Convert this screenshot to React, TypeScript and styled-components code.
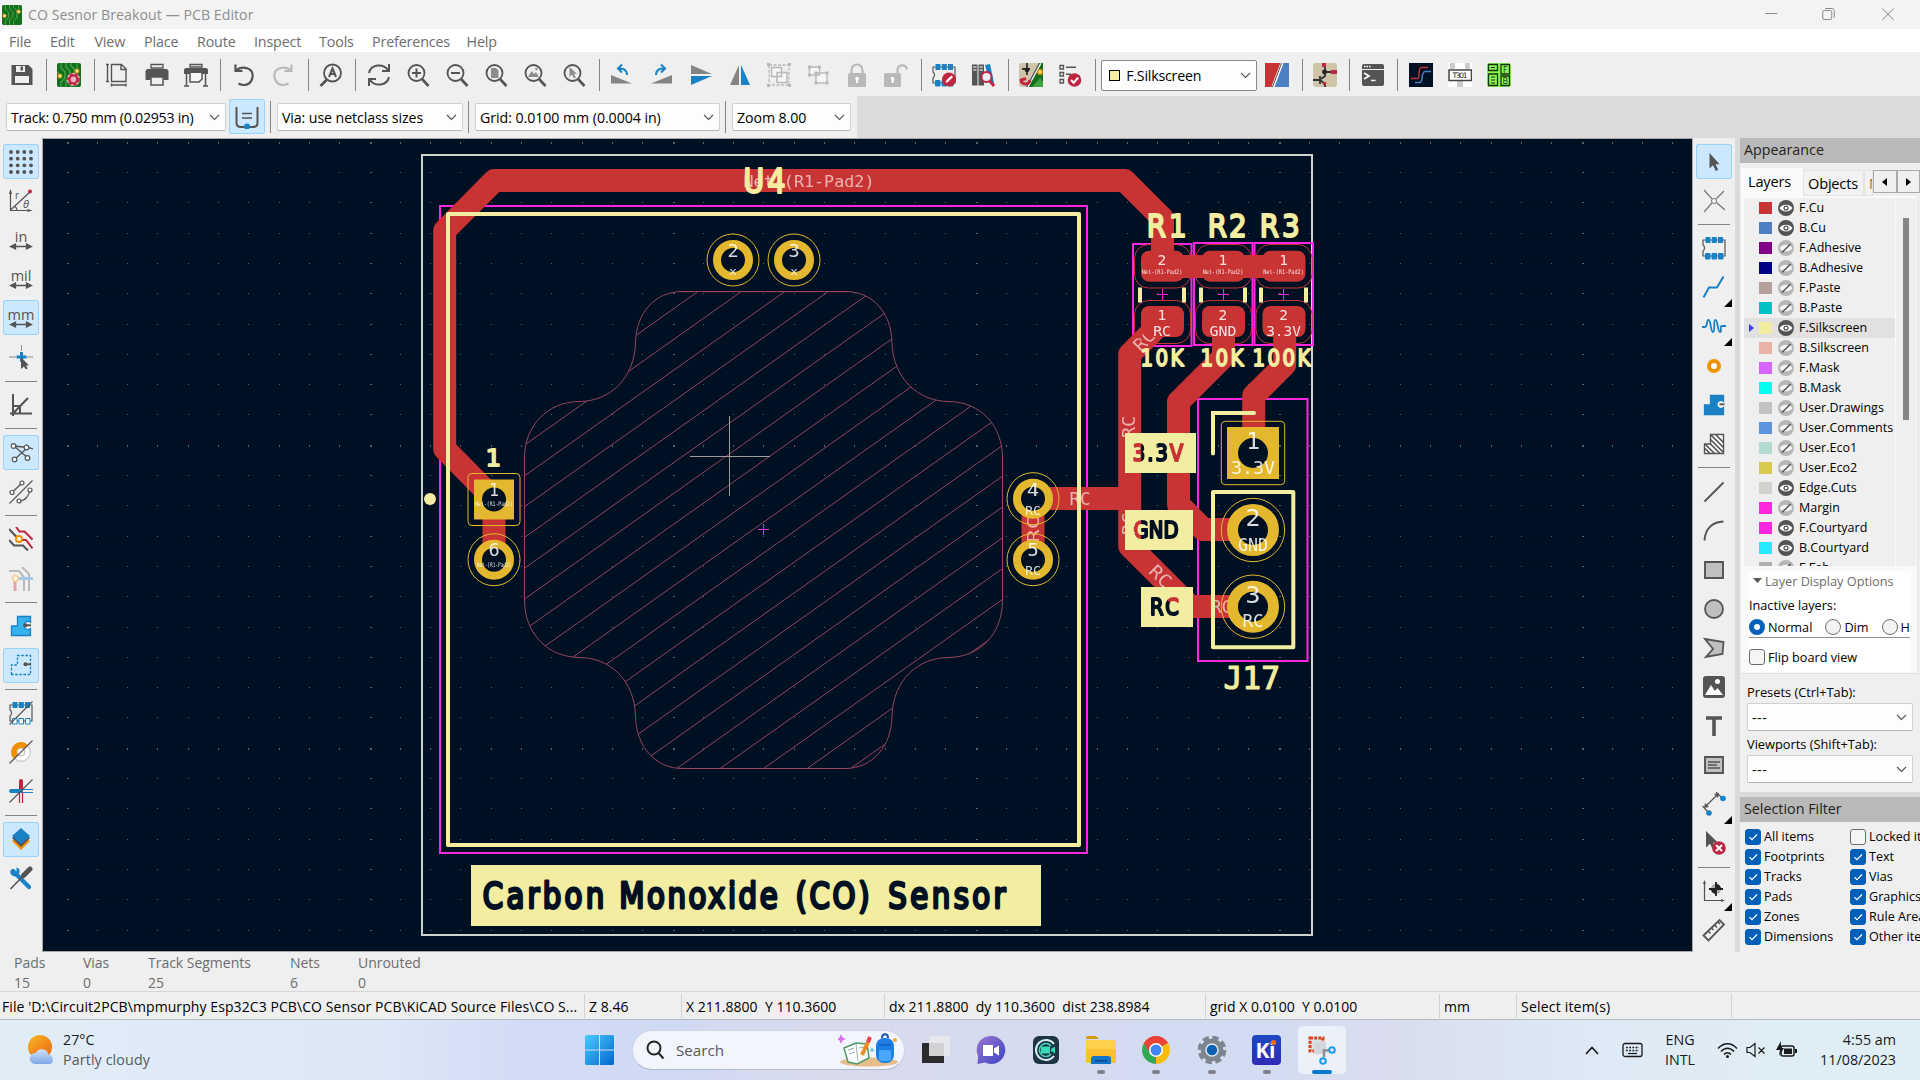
import React from 'react';
import styled, { createGlobalStyle, css } from 'styled-components';

const G = '#545454';
const B = '#1a81c4';
const R = '#bf2641';
const O = '#f29100';
const LG = '#b9b9b9';

const Global = createGlobalStyle`
  * { box-sizing: border-box; }
  body { margin: 0; background: #efefef; overflow: hidden; }
  body, text { font-family: "Open Sans", "Noto Sans", sans-serif; }
`;

const Screen = styled.div`
  width: 1920px;
  height: 1080px;
  display: flex;
  flex-direction: column;
  background: #efefef;
  color: #000;
  font-size: 14px;
  line-height: 20px;
  white-space: pre;
  overflow: hidden;
`;

/* ---------- title and menu ---------- */
const TitleBar = styled.header`
  height: 29px;
  flex: none;
  background: #f3f3f3;
  display: flex;
  align-items: center;
  padding-left: 2px;
  color: #8f8f8f;
`;
const TitleText = styled.span`
  margin-left: 6px;
  flex: 1;
  font-size: 14.2px;
  letter-spacing: 0.02px;
`;
const WindowButtons = styled.div`
  display: flex;
  padding-right: 3px;
  svg { width: 58.5px; height: 29px; }
`;
const MenuBar = styled.nav`
  height: 23px;
  flex: none;
  background: #fff;
  display: flex;
  align-items: center;
  padding: 2px 0 0 9px;
  color: #6d6d6d;
  font-size: 14.3px;
`;
const MenuItem = styled.span<{ $w: number }>`
  width: ${p => p.$w}px;
  letter-spacing: -0.15px;
`;

/* ---------- toolbars ---------- */
const TopBar = styled.div`
  height: 44px;
  flex: none;
  display: flex;
  align-items: center;
  padding: 2px 0 0 2px;
  background: #efefef;
`;
const ToolButton = styled.div<{ $on?: boolean; $v?: boolean }>`
  width: ${p => (p.$v ? 35.5 : 39.15)}px;
  height: 35px;
  flex: none;
  position: relative;
  display: flex;
  align-items: center;
  justify-content: center;
  border-radius: 3px;
  ${p => p.$v && css`margin: 2px 0 2.1px;`}
  ${p => p.$on && css`background: #cce8ff; box-shadow: inset 0 0 0 1px #99d1ff;`}
`;
const Corner = styled.i`
  position: absolute;
  right: 0;
  bottom: -2px;
  border: 4px solid transparent;
  border-right-color: #000;
  border-bottom-color: #000;
`;
const VSep = styled.i<{ $m?: string }>`
  width: 1px;
  height: 32px;
  flex: none;
  background: #848484;
  margin: ${p => p.$m || '0 2.6px 0 5.2px'};
`;
const HSep = styled.i`
  width: 32px;
  height: 1px;
  flex: none;
  background: #848484;
  margin: 4px 0 3.7px;
`;
const OptionsBar = styled.div`
  height: 42px;
  flex: none;
  display: flex;
  background: #dbdbdb;
`;
const OptionsInner = styled.div`
  width: 857px;
  height: 42px;
  background: #efefef;
  display: flex;
  align-items: center;
  padding: 0 0 0 6px;
`;
const Combo = styled.div<{ $w: number; $h?: number; $dark?: boolean; $ls?: number }>`
  width: ${p => p.$w}px;
  height: ${p => p.$h || 28}px;
  flex: none;
  display: flex;
  align-items: center;
  justify-content: space-between;
  padding: 1px 5px 0 4px;
  background: #fdfdfd;
  border: 1px solid ${p => (p.$dark ? '#8a8a8a' : '#d0d0d0')};
  border-bottom-color: ${p => (p.$dark ? '#8a8a8a' : '#b5b5b5')};
  border-radius: 2px;
  font-size: 14.2px;
  letter-spacing: ${p => p.$ls ?? -0.2}px;
  svg { flex: none; }
`;
const Swatch = styled.i<{ $c: string; $line?: boolean }>`
  width: ${p => (p.$line ? 11 : 13)}px;
  height: ${p => (p.$line ? 11 : 12)}px;
  flex: none;
  background: ${p => p.$c};
  ${p => p.$line && css`border: 1px solid #000; margin: 0 6px 0 3px;`}
`;
const Fill = styled.span`flex: 1;`;

/* ---------- work area ---------- */
const Work = styled.main`
  height: 814px;
  flex: none;
  display: flex;
`;
const SideTools = styled.aside<{ $w: number }>`
  width: ${p => p.$w}px;
  flex: none;
  display: flex;
  flex-direction: column;
  align-items: center;
  padding-top: 4px;
  background: #efefef;
`;
const Board = styled.section`
  width: 1651px;
  height: 814px;
  flex: none;
  border: 1px solid #a8a8a8;
  background: #001023;
  svg { display: block; }
`;
const Gutter = styled.div`
  width: 5px;
  background: #dbdbdb;
`;
const Side = styled.aside`
  width: 180px;
  flex: none;
  display: flex;
  flex-direction: column;
  overflow: hidden;
  background: #efefef;
`;
const PanelHead = styled.h2`
  margin: 0;
  height: 25px;
  flex: none;
  padding-left: 4px;
  background: #b9b9b9;
  color: #222;
  font-weight: 400;
  font-size: 14.3px;
  line-height: 24px;
`;
const Tabs = styled.div`
  height: 33px;
  flex: none;
  display: flex;
  align-items: flex-end;
  padding-left: 1px;
  font-size: 14.6px;
  letter-spacing: -0.2px;
`;
const Tab = styled.span<{ $on?: boolean; $w: number }>`
  width: ${p => p.$w}px;
  height: ${p => (p.$on ? 28 : 26)}px;
  padding: ${p => (p.$on ? '2px 0 0 6px' : '2px 0 0 4px')};
  background: ${p => (p.$on ? '#fafafa' : '#f2f2f2')};
  border: 1px solid ${p => (p.$on ? '#fafafa' : '#e2e2e2')};
  overflow: hidden;
`;
const Arrow = styled.span`
  width: 23.5px;
  height: 23px;
  margin-bottom: 3px;
  display: flex;
  align-items: center;
  justify-content: center;
  background: #f0f0f0;
  border: 1px solid #a9a9a9;
`;
const LayerFrame = styled.div`
  height: 478px;
  flex: none;
  width: 177px;
  margin-left: 1px;
  padding: 2px 0 0 3px;
  background: #f9f9f9;
  border-right: 1px solid #e4e4e4;
  border-bottom: 1px solid #e0e0e0;
`;
const ListBox = styled.div`
  display: flex;
  height: 368px;
  width: 172px;
  background: #efefef;
  overflow: hidden;
`;
const Layers = styled.div`
  width: 152px;
  border-right: 1px solid #fafafa;
`;
const LayerRow = styled.div<{ $on?: boolean }>`
  height: 20px;
  display: flex;
  align-items: center;
  padding-left: ${p => (p.$on ? 5 : 15)}px;
  background: ${p => (p.$on ? '#e1e1e1' : 'transparent')};
  font-size: 12.5px;
  svg { margin: 0 5px 0 6px; flex: none; }
`;
const Pointer = styled.i`
  border: 4px solid transparent;
  border-left: 5px solid #3a3af0;
  border-right: 0;
  margin-right: 5px;
`;
const Thumb = styled.i`
  width: 6px;
  height: 202px;
  margin: 20px 0 0 7px;
  background: #858585;
`;
const Display = styled.div`
  width: 162px;
  height: 101px;
  margin: 5px 0 0 5px;
  background: #fff;
  font-size: 12.7px;
  overflow: hidden;
`;
const Line = styled.div<{ $h: number; $c?: string }>`
  height: ${p => p.$h}px;
  display: flex;
  align-items: center;
  color: ${p => p.$c || '#000'};
`;
const RadioLine = styled(Line)`
  border-bottom: 1px solid #8d8d8d;
  width: 161px;
  padding-bottom: 3px;
`;
const Radio = styled.i<{ $on?: boolean; $ml?: number }>`
  width: 16px;
  height: 16px;
  flex: none;
  border-radius: 50%;
  margin: 0 3px 0 ${p => p.$ml || 0}px;
  background: ${p => (p.$on ? '#fff' : '#f3f3f3')};
  border: ${p => (p.$on ? '5px solid #005fb8' : '1px solid #6f6f6f')};
`;
const Box = styled.i<{ $on?: boolean }>`
  width: 16px;
  height: 16px;
  flex: none;
  border-radius: 3px;
  margin-right: 3px;
  display: flex;
  background: ${p => (p.$on ? '#005fb8' : '#f5f5f5')};
  border: 1px solid ${p => (p.$on ? '#005fb8' : '#6a6a6a')};
`;
const Presets = styled.div`
  height: 118px;
  flex: none;
  padding: 9px 0 0 7px;
  font-size: 12.8px;
`;
const PresetLabel = styled.div<{ $mt?: number }>`
  height: 20px;
  margin-top: ${p => p.$mt || 0}px;
  line-height: 18px;
`;
const Strip = styled.div`
  height: 5px;
  flex: none;
  background: #dbdbdb;
`;
const Filter = styled.div`
  display: grid;
  grid-template-columns: 105px 120px;
  grid-auto-rows: 20px;
  padding: 5px 0 0 5px;
  font-size: 12.6px;
`;
const Check = styled.label`
  display: flex;
  align-items: center;
`;

/* ---------- message panel, status bar ---------- */
const Messages = styled.div`
  height: 40px;
  flex: none;
  display: flex;
  padding: 1px 0 0 14px;
  color: #6d6d6d;
  font-size: 14px;
  letter-spacing: -0.02px;
  border-bottom: 1px solid #d6d6d6;
`;
const Message = styled.div<{ $w: number }>`
  width: ${p => p.$w}px;
`;
const Status = styled.footer`
  height: 28px;
  flex: none;
  display: flex;
  align-items: center;
  font-size: 14px;
  border-bottom: 1px solid #b4b9c2;
`;
const Field = styled.span<{ $w: number; $ls?: number }>`
  width: ${p => p.$w}px;
  height: 24px;
  flex: none;
  padding: 4px 0 0 4px;
  line-height: 18px;
  border-right: 1px solid #d3d3d3;
  letter-spacing: ${p => p.$ls ?? 0.02}px;
  &:first-child { padding-left: 2px; }
  &:last-child { border: 0; }
`;

/* ---------- task bar ---------- */
const TaskBar = styled.footer`
  height: 60px;
  flex: none;
  display: flex;
  align-items: center;
  background: linear-gradient(90deg, #e0edf6 0, #dde8f7 380px, #d2dcf5 520px, #d1daf3 680px, #d9daec 830px, #d2dcf2 1250px, #d9dcee 1370px, #deeaf5 1600px, #e0eff5 1920px);
`;
const Weather = styled.div`
  width: 575px;
  display: flex;
  align-items: center;
  padding-left: 25px;
  gap: 6px;
  font-size: 14.3px;
  color: #1d1d1d;
  small { display: block; font-size: 14.3px; letter-spacing: 0.1px; color: #56595d; }
`;
const Search = styled.div`
  width: 273px;
  height: 40px;
  margin: 0 3px 0 9px;
  border-radius: 20px;
  background: #f2f5fc;
  border: 1px solid #cfd5e6;
  border-bottom-color: #b3b9cc;
  display: flex;
  align-items: center;
  padding: 0 4px 0 12px;
  gap: 11px;
  color: #55585e;
  font-size: 15.2px;
`;
const Task = styled.div<{ $on?: boolean; $run?: boolean }>`
  width: 48px;
  height: 48px;
  margin: 0 3.6px;
  flex: none;
  border-radius: 5px;
  position: relative;
  display: flex;
  align-items: center;
  justify-content: center;
  background: ${p => (p.$on ? '#ebf0f9' : 'transparent')};
  &::after {
    content: '';
    position: absolute;
    bottom: 0;
    width: ${p => (p.$on ? 20 : 8)}px;
    height: ${p => (p.$on || p.$run ? 4 : 0)}px;
    border-radius: 2px;
    background: ${p => (p.$on ? '#0a76d0' : '#80838d')};
  }
`;
const Tray = styled.div`
  flex: 1;
  display: flex;
  align-items: center;
  justify-content: flex-end;
  padding-right: 24px;
  color: #1a1a1a;
  font-size: 14.3px;
`;
const Stack = styled.div<{ $right?: boolean; $w: number }>`
  width: ${p => p.$w}px;
  text-align: ${p => (p.$right ? 'right' : 'center')};
`;

/* ---------- icons ---------- */
const Svg = ({ s = 24, children, ...r }: any) => (
  <svg width={s} height={s} viewBox="0 0 24 24" fill="none" {...r}>{children}</svg>
);
const Lens = ({ children }: any) => (
  <Svg><circle cx="10.5" cy="10" r="8" stroke={G} strokeWidth="1.8" fill="none" /><path d="M16 16l6.500 7" stroke={G} strokeWidth="2.600" />{children}</Svg>
);
const Chip = ({ open, children }: any) => (
  <Svg>
    <path d="M1 4H23V20H1V15c2-1 2-5 0-6z" stroke={G} strokeWidth="1.200" />
    <path d="M3.500 1h5v6h-5zM9.800 1h5v6h-5zM16 1h5v6h-5z" fill={B} />
    <path d="M3.500 17.500h4.500v5.500h-4.500zM10 17.500h4.500v5.500H10zM16.500 17.500H21v5.500h-4.500z" fill={open ? '#fff' : B} stroke={B} />
    {children}
  </Svg>
);
const Traces = () => (
  <>
    <rect width="24" height="24" rx="2" fill="#14701d" />
    <path d="M4 0v5l4 4v6l-4 4v5M9 0v4l4 4v6l-4 4v6M14 0v3l4 4v9M0 9l3 3v4M20 0v6M14 24v-5l4-4" stroke="#4aa84f" strokeWidth="1.200" fill="none" />
    <circle cx="3" cy="13" r="2" fill="#ffe9a0" stroke={O} /><circle cx="20" cy="8" r="2" fill="#ffe9a0" stroke={O} />
  </>
);
const Slash = () => <path d="M.5 23.500L23.500.5" stroke={G} strokeWidth="1.100" />;
const Arr = () => <path d="M5 19.500H19M1.500 19.500l5-2.400v4.800zM22.500 19.500l-5-2.400v4.800z" stroke={G} strokeWidth="1.300" fill={G} />;
const Unit = ({ t }: { t: string }) => (
  <Svg overflow="visible"><text x="12" y="14" textAnchor="middle" fontSize="14.500" fill={G} style={{ fontFamily: 'Open Sans' }}>{t}</text><g transform="translate(0 -1)"><Arr /></g></Svg>
);
const Zone = ({ fill, stroke, dash }: any) => (
  <path d="M2.500 21.500V12H8.500V2.500H21.500V8.300A4 4 0 1 0 21.500 14.500V21.500Z" fill={fill} stroke={stroke} strokeWidth="1.300" strokeDasharray={dash} />
);
const Gear = ({ c, r = 8 }: any) => (
  <><circle cx="12" cy="12" r={r} fill="none" stroke={c} strokeWidth="3.500" /><circle cx="12" cy="12" r={r + 2.200} fill="none" stroke={c} strokeWidth="3" strokeDasharray="4.200 3.800" /></>
);

const icons: Record<string, React.ReactNode> = {
  save: <Svg><path d="M2 2h17l4 4v16H2z" transform="translate(-.5)" fill={G} /><path d="M6 3h9v6H6zM5 13h14v7H5z" fill="#efefef" /><path d="M10.500 3.500h2.500v4h-2.500z" fill={G} /></Svg>,
  setup: <Svg><Traces /><g transform="translate(8.500 8.500) scale(.66)"><circle cx="12" cy="12" r="10" fill="#e7b3c0" /><Gear c={R} r={6} /></g></Svg>,
  page: <Svg><path d="M6.500 1.500h10l4.500 4.500v12.500H6.500zM16 1.500v5h5M1 1.500h3M2.500 1.500v17M1 18.500h3M6.500 22h14.500M6.500 20.500v3M21 20.500v3" stroke={G} strokeWidth="1.400" /></Svg>,
  print: <Svg><path d="M6 1.500h12V5H6z" stroke={G} strokeWidth="1.300" /><path d="M2 6h20l1.500 2v9h-5v-3h-13v3H.5V8z" fill={G} /><path d="M6 14h12v8H6z" stroke={G} strokeWidth="1.500" fill="#efefef" /></Svg>,
  plot: <Svg><path d="M6 1.500h12V4H6z" stroke={G} strokeWidth="1.300" /><path d="M1 5h22l1 2v4H0V7z" fill={G} /><path d="M6 10v9h9l3-3v-6M2.500 11v12M21.500 11v12M0 23h5M19 23h5" stroke={G} strokeWidth="1.500" fill="#f6f6f6" /></Svg>,
  undo: <Svg><path d="M3.500 1.500v6.500h7M4 7.500C10 2 22 5 20.500 14c-1 8-8.500 9.500-14 6.500" stroke={G} strokeWidth="2.200" /></Svg>,
  redo: <Svg><path d="M20.500 1.500v6.500h-7M20 7.500C14 2 2 5 3.500 14c1 8 8.500 9.500 14 6.500" stroke={LG} strokeWidth="2.200" /></Svg>,
  find: <Svg><circle cx="13.500" cy="10" r="8.500" stroke={G} strokeWidth="1.800" /><path d="M8 16.500L1.500 23" stroke={G} strokeWidth="2.800" /><path d="M10 14l3.500-8.500L17 14M11.500 11h4" stroke={G} strokeWidth="2" /></Svg>,
  refresh: <Svg><path d="M2 10C4 1 16 0 21 7M22 14C20 23 8 24 3 17M22 1v7h-7M2 23v-7h7" stroke={G} strokeWidth="2" /></Svg>,
  zin: <Lens><path d="M10.500 5.500v9M6 10h9" stroke={G} strokeWidth="2" /></Lens>,
  zout: <Lens><path d="M6 10h9" stroke={G} strokeWidth="2" /></Lens>,
  zfit: <Lens><path d="M7 5h5l2.500 2.500V15H7z" fill="#8d8d8d" /></Lens>,
  zobj: <Lens><path d="M5 14l3.500-6 2.500 3 2-2 3 5z" fill="#8d8d8d" /><circle cx="13.500" cy="6" r="1.300" fill="#8d8d8d" /></Lens>,
  zsel: <Lens><path d="M7.500 4v10l2.500-2.500 2 4 1.800-1-2-3.700H15z" fill="#8d8d8d" /></Lens>,
  ccw: <Svg><path d="M1 12l21 8.500H1z" fill="#848484" /><path d="M17 12c0-5-4-7-8.500-6.500M12 1.500L8 5.500l4 4" stroke={B} strokeWidth="2" /></Svg>,
  cw: <Svg><path d="M23 12v8.500H2z" fill="#848484" /><path d="M7 12c0-5 4-7 8.500-6.500M12 1.500l4 4-4 4" stroke={B} strokeWidth="2" /></Svg>,
  flipv: <Svg><path d="M2 2l21 9H2z" fill="#848484" /><path d="M2 22l21-9H2z" fill={B} /></Svg>,
  fliph: <Svg><path d="M11 2v20H2z" fill="#848484" /><path d="M13 2v20h9z" fill={B} /></Svg>,
  group: <Svg><path d="M2 2h20v20H2z" stroke={LG} strokeDasharray="3 1.500" strokeWidth="1.300" /><path d="M0 0h3v3H0zM21 0h3v3h-3zM0 21h3v3H0zM21 21h3v3h-3z" fill={LG} /><path d="M4.500 4.500h10v9h-10zM10 9.500h10v10H10z" stroke={LG} strokeWidth="1.500" fill="#f6f6f6" /></Svg>,
  ungroup: <Svg><path d="M3.500 4h10v8h-10zM10 10h11v10H10z" stroke={LG} strokeWidth="1.400" fill="#f6f6f6" /><path d="M2 2.500h3v3H2zM12 2.500h3v3h-3zM2 10.500h3v3H2zM8.500 8.500h3v3h-3zM19.500 8.500h3v3h-3zM8.500 18.500h3v3h-3zM19.500 18.500h3v3h-3z" fill={LG} /></Svg>,
  lock: <Svg><path d="M6.500 11V7a5.500 5.500 0 0 1 11 0v4" stroke={LG} strokeWidth="2.200" /><rect x="3" y="10" width="18" height="14" rx="1.500" fill={LG} /><path d="M11 15h2.200v5H11z" fill="#fff" /><circle cx="12.100" cy="15.500" r="1.800" fill="#fff" /></Svg>,
  unlock: <Svg><path d="M13.500 11V6.500a4.800 4.800 0 0 1 9.500 0" stroke={LG} strokeWidth="2.200" /><rect x="0" y="10" width="17" height="14" rx="1.500" fill={LG} /><path d="M7.500 15h2.200v5H7.500z" fill="#fff" /><circle cx="8.600" cy="15.500" r="1.800" fill="#fff" /></Svg>,
  fpedit: <Chip><circle cx="17" cy="16.500" r="7" fill={R} /><path d="M13.500 20l1-3 5-4.500 1.500 1.500-5 5z" fill="#fff" /></Chip>,
  fplib: <Svg><path d="M1 1.500h5.500v21H1zM7.500 1.500H13v21H7.500z" fill={G} /><path d="M2 4h3.500M2 7h3.500M8.500 4H12M8.500 7H12" stroke="#fff" /><path d="M14 2l5-1 4 19-4 1z" fill={B} /><circle cx="15.500" cy="14" r="5" fill="#e8f0f8" stroke={R} strokeWidth="2" /><path d="M19 18l4 5" stroke={R} strokeWidth="3" /></Svg>,
  update: <Svg><rect width="24" height="24" rx="3" fill="#cfc3a8" /><path d="M20 0h4v24H9z" fill="#14701d" /><path d="M21 0L8 24" stroke="#fff" strokeWidth="3" /><path d="M20.500 0L7.500 24" stroke={G} strokeWidth="1.500" /><path d="M8 0v12M3 6h8" stroke="#333" strokeWidth="1.800" /><circle cx="8" cy="7" r="2.300" fill="#222" /><circle cx="21" cy="9" r="2.200" fill="#ffe9a0" stroke={O} strokeWidth="1.500" /><path d="M2 16c0 6 8 7 9 1M2 17l5-1.500" stroke={R} strokeWidth="3" /><path d="M13 24l8-9 3 4v5z" fill="#3ea33f" /></Svg>,
  drc: <Svg><path d="M2 2.500h3.500V6H2zM2 9.500h3.500V13H2zM2 16.500h3.500V20H2z" stroke={G} strokeWidth="1.300" /><path d="M8 4.200h10M8 11.200h5" stroke={G} strokeWidth="1.500" /><circle cx="16.500" cy="17" r="6.800" fill={R} /><path d="M13 17l2.700 2.700 4.500-5" stroke="#fff" strokeWidth="2" /></Svg>,
  pair: <Svg><path d="M0 0h16L7 24H0z" fill="#c83434" /><path d="M17 0h7v24H8z" fill="#4d7fc4" /><path d="M17 0L8 24" stroke="#fff" strokeWidth="3" /><path d="M16.500 0l-9 24" stroke={G} strokeWidth="1" /></Svg>,
  sch: <Svg><rect width="24" height="24" rx="3" fill="#cfc3a8" /><path d="M0 17h7M7 13v8M8 16l4-3V9M12 9V4M12 9h7M7 17l5 4v3" stroke="#333" strokeWidth="1.800" /><path d="M9 0h4v4H9zM18 7h6v4h-6zM10 19h3v3h-3z" fill={R} /><circle cx="11.500" cy="9" r="2.400" fill="#222" /></Svg>,
  term: <Svg><path d="M1 3a2 2 0 0 1 2-2h18a2 2 0 0 1 2 2v3H1zM1 7h22v14a2 2 0 0 1-2 2H3a2 2 0 0 1-2-2z" fill={G} /><path d="M3 3.500h7" stroke="#fff" strokeWidth="1.500" strokeDasharray="1.500 1" /><path d="M3 10l5 3-5 3M10 17.500h4.500" stroke="#fff" strokeWidth="1.700" /></Svg>,
  curve: <Svg><rect width="24" height="24" fill="#001023" /><path d="M2 15.500h7c2 0 0-11 3-11h7" stroke="#c83434" strokeWidth="1.500" /><path d="M6 19.500h5c3 0 1-11 5-11h6" stroke="#4d7fc4" strokeWidth="1.500" /></Svg>,
  tag: <Svg><rect width="24" height="24" fill="#fff" /><path d="M2 0h5v6H2zM17 0h5v6h-5zM9 18h6v6H9z" fill="#ccc" /><path d="M1 7h22.500v10.500H1z" fill="#fff" stroke="#444" strokeWidth="1.500" /><text x="12" y="15" textAnchor="middle" fontSize="7.500" textLength="15" fill="#222" style={{ fontFamily: 'DejaVu Sans' }}>T301</text></Svg>,
  fb: <Svg><rect width="24" height="24" rx="3" fill="#8cf550" /><path d="M1.500 1.500h9v6h-9zM1.500 11h9v11.500h-9zM14 1.500h8.500v9.500H14zM14 13h8.500v9.500H14z" stroke="#14350c" strokeWidth="1.300" /><path d="M4 4.500h4M4 14h4M4 17h4M4 20h4" stroke="#14350c" /><text x="18.300" y="9.500" textAnchor="middle" fontSize="8.500" fill="#14350c">F</text><text x="18.300" y="21" textAnchor="middle" fontSize="8.500" fill="#14350c">B</text></Svg>,
  grid: <Svg>{[2, 8.7, 15.3, 22].map(x => [2, 8.7, 15.3, 22].map(y => <circle key={`${x}-${y}`} cx={x} cy={y} r="1.900" fill={G} />))}</Svg>,
  polar: <Svg><path d="M1.500 1v20.500H22M1.500 21L21 3M8 21.500c0-2-.5-3-2-4" stroke={G} strokeWidth="1.200" /><path d="M0 5l1.500-5L3 5zM18.500 20l5 1.500-5 1.500z" fill={G} /><circle cx="21" cy="2.500" r="2" fill={R} /><text x="6" y="10" fontSize="10" fill={G}>r</text><text x="14" y="18.500" fontSize="11" fontStyle="italic" fill={G}>θ</text></Svg>,
  cursor: <Svg><path d="M12.500 0v6M0 12h7M18 12h6" stroke="#8d8d8d" /><path d="M12.500 7v10M7.500 12h10" stroke={B} strokeWidth="3" /><path d="M12 12v12l3-2.500 1.800 3 2-1-1.800-3h3z" fill={G} /></Svg>,
  angle: <Svg><path d="M4 1v22M1 20.500h22M4 20.500L19 5M4 13h7v7" stroke={G} strokeWidth="2" /></Svg>,
  rats: <Svg><path d="M5 5l14 1.500 5 1.500M5 5l14 12M18 7L6 18" stroke={G} strokeWidth="1.300" />{[[4.500, 5], [17.500, 6.500], [5.500, 18.500], [18.500, 17]].map(([x, y]) => <circle key={x} cx={x} cy={y} r="2.300" fill="#fff" stroke={G} strokeWidth="1.200" />)}</Svg>,
  ratsc: <Svg><Slash /><path d="M3 12.500L13 3M10 21c6 0 10-5 11-11" stroke={G} strokeWidth="1.200" />{[[3, 12.500], [13, 3], [10, 21], [21, 10]].map(([x, y]) => <circle key={x} cx={x} cy={y} r="2" fill="#fff" stroke={G} strokeWidth="1.200" />)}</Svg>,
  hlnet: <Svg><path d="M7 0l3.500 4.500h5L23.500 12.500M11 13h6l6.500 8.500" stroke={R} strokeWidth="2" /><path d="M0 2l8 8.500M0 13l5 5.500h9l5 5" stroke={G} strokeWidth="2" /><circle cx="10" cy="12" r="3" fill="#fff" stroke={O} strokeWidth="1.800" /></Svg>,
  dim: <Svg><path d="M0 4h10l5 6v14M13 0l7 7v17" stroke={LG} strokeWidth="2" /><path d="M6 12v12" stroke="#e6a1ae" strokeWidth="3" /><path d="M8 11.500h16" stroke="#9fcbe8" strokeWidth="3" /><circle cx="6.500" cy="11.500" r="2.800" fill="#fff" stroke="#f8cf93" strokeWidth="1.800" /></Svg>,
  zfill: <Svg><Zone fill="#36b3ee" stroke={B} /><path d="M17 11.300h5" stroke={G} strokeWidth="2" /><circle cx="16.500" cy="11.300" r="2" fill={G} /></Svg>,
  zout2: <Svg><path d="M2.500 21.500V12H8.500V2.500H21.500V21.500Z" stroke={B} strokeWidth="1.300" strokeDasharray="2.600 1.500" /><path d="M17 11.300h5" stroke={G} strokeWidth="2" /><circle cx="16.500" cy="11.300" r="2" fill={G} /></Svg>,
  fpo: <Chip open><Slash /></Chip>,
  via: <Svg><circle cx="12" cy="12" r="9.300" fill="#fff" stroke={LG} /><circle cx="12" cy="12" r="4" stroke={LG} /><path d="M5 19A9.500 9.500 0 1 1 19 5l-4 4a4 4 0 0 0-6 6z" fill={O} /><Slash /></Svg>,
  trk: <Svg><path d="M12 2v10" stroke={R} strokeWidth="4" strokeLinecap="round" /><path d="M2 12h10" stroke={B} strokeWidth="4" strokeLinecap="round" /><path d="M10.500 13v11M13.500 13v11" stroke={R} strokeWidth="1.200" /><path d="M13 10.500h11M13 13.500h11" stroke={B} strokeWidth="1.200" /><Slash /></Svg>,
  layers: <Svg><path d="M3 14l9 9 9-9-9-6z" fill={O} /><path d="M3 11l9 9 9-9-9-6z" fill={G} /><path d="M3 9l9-8 9 8-9 8z" fill={B} /></Svg>,
  tools: <Svg><path d="M4 5l16 16" stroke={B} strokeWidth="4.200" strokeLinecap="round" /><path d="M1.500 4.500L5 7l2.500-1.500V1.500c3 .5 4 4 2.500 6.500L7 10.500C3 10.500.5 8 1.500 4.500z" fill={B} /><path d="M1.500 23L14 10" stroke={G} strokeWidth="1.500" /><path d="M14.500 9.500L21 3" stroke={G} strokeWidth="5" strokeLinecap="round" /></Svg>,
  arrow: <Svg><path d="M7.500 3v15.500l3.500-3.300L13.800 21l2.400-1.200-2.700-5.500h4.200z" fill={G} /></Svg>,
  netx: <Svg><path d="M2 1l8 9M22 2l-8 8M2 23l8-9M23 21l-9-8" stroke="#777" strokeWidth="1.200" /><circle cx="12" cy="12" r="2.500" stroke="#777" fill="#fff" /></Svg>,
  fp: <Chip />,
  route: <Svg><path d="M1.500 22.500L7 12.500H15L21.500 1.500" stroke={B} strokeWidth="2" strokeLinejoin="round" /></Svg>,
  tune: <Svg><path d="M0 12h3c3 0 1-7 3.500-7S8.500 17 11 17 11 5 13.500 5 15.500 17 18 17 17 11 20 11h4" stroke={B} strokeWidth="1.800" /></Svg>,
  vput: <Svg><circle cx="12" cy="12" r="5" fill="#fff" stroke={O} strokeWidth="4" /></Svg>,
  zput: <Svg><Zone fill={B} stroke={B} /><path d="M17.500 11.300h5" stroke={G} strokeWidth="1.800" /></Svg>,
  hatch: <Svg><path d="M2.500 21.500V12h6V2.500h13v19z" stroke={G} strokeWidth="1.400" fill="#fff" /><path d="M3 12l9.500 9.500M8.500 12l9.500 9.500M8.500 7.500l13 13M9 3l12.500 12.500M14 3l7.500 7.500M3 16.500l5 5" stroke={G} strokeWidth="1.700" /></Svg>,
  line: <Svg><path d="M2.500 21.500l19-19" stroke={G} strokeWidth="1.800" /></Svg>,
  arc: <Svg><path d="M2.500 21.500C3 10 10 3 21.500 2.500" stroke={G} strokeWidth="2" /></Svg>,
  rect: <Svg><path d="M3 4h18v16H3z" fill="#bfbfbf" stroke={G} strokeWidth="1.900" /></Svg>,
  circ: <Svg><circle cx="12" cy="12" r="9" fill="#bfbfbf" stroke={G} strokeWidth="1.800" /></Svg>,
  poly: <Svg><path d="M3 3l18.500 3-1 12L4 21l7-8z" fill="#bfbfbf" stroke={G} strokeWidth="1.800" /></Svg>,
  img: <Svg><rect x="1" y="1" width="22" height="22" rx="3" fill={G} /><path d="M3 20l6-10 4 6 2.500-3L21 20z" fill="#fff" /><circle cx="15.500" cy="6.500" r="2.500" fill="#fff" /></Svg>,
  text: <Svg><path d="M4 4h16M12 3v19" stroke={G} strokeWidth="3.600" /></Svg>,
  tbox: <Svg><path d="M3 4h18v16H3z" fill="#bfbfbf" stroke={G} strokeWidth="1.900" /><path d="M6 9h12M6 12h9M6 15h12" stroke={G} strokeWidth="1.300" /></Svg>,
  meas: <Svg><path d="M4 14L15 3M.5 14l5 5.500M14 0l6 6" stroke={G} strokeWidth="1.200" /><path d="M2 16l1-5 4 4zM17 1l-1 5-4-4z" fill={G} /><circle cx="7" cy="21" r="2.800" fill={B} /><circle cx="21" cy="6.500" r="2.800" fill={B} /></Svg>,
  del: <Svg><path d="M4 0v16.500l4-3.700 3 6 3-1.500-3-5.500h5z" fill={G} /><circle cx="17" cy="17" r="6.800" fill={R} /><path d="M14 14l6 6M20 14l-6 6" stroke="#fff" strokeWidth="2" /></Svg>,
  origin: <Svg><path d="M2.500 3v18.500H22" stroke={G} strokeWidth="1.200" /><path d="M1 5l1.500-4L4 5zM19 20l4 1.500-4 1.500z" fill={G} /><circle cx="14" cy="10" r="5" fill="#aaa" /><path d="M14 3v14M7 10h14" stroke="#222" strokeWidth="1.800" /><path d="M14 10V5a5 5 0 0 1 5 5zM14 10v5a5 5 0 0 1-5-5z" fill="#222" /></Svg>,
  ruler: <Svg><path d="M1.500 17.500L17.500 2 22 6.500 6.500 22.500z" stroke={G} strokeWidth="1.800" /><path d="M6 13l2.500 2.500M9.500 10l2 2M12.500 7l2.500 2.500M16 4l2 2" stroke={G} strokeWidth="1.500" /></Svg>,
};

const Tools = ({ list, vertical, on = [], more = [] }: { list: string; vertical?: boolean; on?: string[]; more?: string[] }) => (
  <>
    {list.split(' ').map((n, i) =>
      n === '|' ? (vertical ? <HSep key={i} /> : <VSep key={i} />) : (
        <ToolButton key={i} $v={vertical} $on={on.includes(n)}>
          {['in', 'mil', 'mm'].includes(n) ? <Unit t={n} /> : icons[n]}
          {more.includes(n) && <Corner />}
        </ToolButton>
      )
    )}
  </>
);
const Chevron = () => <svg width="11" height="7" fill="none"><path d="M1 1l4.500 4.500L10 1" stroke="#555" strokeWidth="1.100" /></svg>;
const Eye = ({ on }: { on: boolean }) => (
  <svg width="16" height="16" viewBox="0 0 16 16" fill="none">
    <circle cx="8" cy="8" r="8" fill={on ? G : '#b6b6b6'} />
    <path d="M1.500 8C4 3.500 12 3.500 14.500 8 12 12.500 4 12.500 1.500 8z" fill={on ? '#fff' : '#f4f4f4'} />
    {on ? <><circle cx="8" cy="8" r="2.600" fill={G} /><circle cx="8" cy="8" r="1.300" fill="#fff" /></> : <path d="M4 12.500L12.500 4" stroke={G} strokeWidth="1.400" />}
  </svg>
);
const Tick = () => <svg width="14" height="14" fill="none"><path d="M3.500 7.200l2.500 2.500 5-5.200" stroke="#fff" strokeWidth="1.200" /></svg>;

/* ---------- board drawing ---------- */
const SILK = '#f2eda1';
const CU = '#c83434';
const YARD = '#ff26e2';
const PAD = '#e3b72e';
const KEEP = '#96455f';

const Glyphs = styled.text<{ $mono?: boolean }>`
  font-family: ${p => (p.$mono ? '"DejaVu Sans Mono"' : '"DejaVu Sans"')}, monospace;
  text-anchor: middle;
  stroke-linejoin: round;
  stroke-linecap: round;
  vector-effect: non-scaling-stroke;
`;
type LabelProps = { x: number; y: number; w: number; h: number; t: string; c?: string; sw?: number; rot?: number; mono?: boolean; o?: number; s?: number };
/* Text centred on x, y with its capitals h high and its ink w wide; s narrows the letters and spreads them over the same width. */
const Label = ({ x, y, w, h, t, c = SILK, sw = 0, rot = 0, mono, o, s = 1 }: LabelProps) => {
  const cap = h - sw;
  return (
    <Glyphs $mono={mono} x={0} y={cap / 2} fontSize={cap / 0.729} fill={c} stroke={sw ? c : 'none'} strokeWidth={sw} opacity={o}
      textLength={((w - sw) * t.length) / (t.length - 0.2) / s} lengthAdjust={s === 1 ? 'spacingAndGlyphs' : 'spacing'}
      transform={`translate(${x} ${y}) rotate(${rot}) scale(${s} 1)`}>{t}</Glyphs>
  );
};
const Net = (p: LabelProps) => <Label mono c="#fff" o={0.62} {...p} />;
const PadName = (p: LabelProps) => <Label mono c="#fff" o={0.85} {...p} />;

const RoundPad = ({ x, y, r, hole, gap }: any) => (
  <><circle cx={x} cy={y} r={(r + hole) / 2} fill="#001023" stroke={PAD} strokeWidth={r - hole} /><circle cx={x} cy={y} r={gap} stroke={PAD} /></>
);
const SquarePad = ({ x, y, r, hole, gap }: any) => (
  <><rect x={x - r} y={y - r} width={2 * r} height={2 * r} fill={PAD} /><circle cx={x} cy={y} r={hole} fill="#001023" /><rect x={x - gap} y={y - gap} width={2 * gap} height={2 * gap} rx="4" stroke={PAD} /></>
);
const dots = (() => {
  let d = '';
  for (let i = 0; i < 55; i++) for (let j = 0; j < 27; j++) {
    const x = Math.round(66.5 + i * 30.3), y = Math.round(141.700 + j * 30.3);
    const w = i % 10 ? 1 : 2, h = j % 10 ? 1 : 2;
    d += `M${x} ${y}h${w}v${h}h-${w}z`;
  }
  return d;
})();
const zone = 'M682 291.500H846C872 291.500 891.500 312 892 343C893 378 918 401.500 949 401.500C980 402 1002.500 425 1002.500 458V600C1002.500 634 980 657 949 657.500C918 657.500 893 680 892 716C891.500 747 872 768 846 768.500H682C656 768.500 636 747 635.500 716C634.500 680 610 657.500 579 657.500C548 657 524.500 634 524.500 600V458C524.500 425 548 402 579 401.500C610 401.500 634.500 378 635.500 343C636 312 656 291.500 682 291.500Z';
const parts = [
  { x: 1162.5, name: 'R1', nx: 1166.7, nw: 38, val: '10K', vx: 1162, vw: 42, a: '2', b: '1', net: 'RC', netw: 16, y0: 243.5, t: [1140, 1184] },
  { x: 1223.5, name: 'R2', nx: 1227.3, nw: 37, val: '10K', vx: 1222, vw: 42, a: '1', b: '2', net: 'GND', netw: 25, y0: 242.5, t: [1201, 1245] },
  { x: 1284, name: 'R3', nx: 1279.7, nw: 38, val: '100K', vx: 1281.5, vw: 57, a: '1', b: '2', net: '3.3V', netw: 33, y0: 242.5, t: [1261, 1306] },
];
const tags = [
  { id: 'v', x: 1125, y: 433, w: 71, h: 40, t: '3.3V', tx: 1158, ty: 452.5, tw: 50, th: 19 },
  { id: 'g', x: 1125, y: 510, w: 68, h: 40, t: 'GND', tx: 1156, ty: 529.5, tw: 44, th: 19 },
  { id: 'r', x: 1141, y: 587, w: 52, h: 40, t: 'RC', tx: 1164.5, ty: 606.5, tw: 28, th: 19 },
];

const BoardView = () => (
  <svg width="1649" height="812" viewBox="43 139 1649 812" fill="none">
    <defs>
      <clipPath id="zone"><path d={zone} /></clipPath>
      {tags.map(g => (
        <mask key={g.id} id={'tag-' + g.id} maskUnits="userSpaceOnUse" x={g.x} y={g.y} width={g.w} height={g.h}>
          <rect x={g.x} y={g.y} width={g.w} height={g.h} fill="#fff" />
          <Label x={g.tx} y={g.ty} w={g.tw} h={g.th} t={g.t} sw={2} s={0.84} c="#000" />
        </mask>
      ))}
    </defs>
    <path d={dots} fill="#56616c" />
    <rect x="422" y="155" width="890" height="780" stroke="#d0d2cd" strokeWidth="2" />
    <rect x="440" y="206" width="647" height="647" stroke={YARD} strokeWidth="2" />
    <rect x="1198" y="399" width="109.500" height="262" stroke={YARD} strokeWidth="2" />
    {parts.map(p => <rect key={p.name} x={p.x - 29.500} y={p.y0 + .5} width="58.500" height="102" stroke={YARD} strokeWidth="2" />)}

    <g stroke={CU} strokeWidth="23" strokeLinecap="round" strokeLinejoin="round">
      <path d="M1162.500 266V218.400L1124.700 180.600H494.300L444.700 230.500V449L494 499V559" />
      <path d="M1162.500 266.500H1284" />
      <path d="M1162.500 321.500L1129.700 354.300V546L1190.400 606.600H1253M1129.700 498.500H1033V559" />
      <path d="M1223.500 321.500V356.800L1178.500 401.800V504.500L1203.500 529.500H1253" />
      <path d="M1284.700 321.500V364.700L1253.700 395.700V450" />
    </g>
    <path d={zone} stroke={KEEP} />
    <g clipPath="url(#zone)" stroke={KEEP}>
      {Array.from({ length: 26 }, (_, k) => {
        const x = 610.6 + k * 43.5 - 43.5;
        return <path key={k} d={`M${x + 100} 220.900L${x - 700} 787.300`} />;
      })}
    </g>

    <Net x={809} y={181} w={129} h={12} t="Net-(R1-Pad2)" />
    <Net x={1080} y={498.7} w={19} h={13} t="RC" />
    <Net x={1032.6} y={529.300} w={24} h={12} t="RC" rot={-90} />
    <Net x={1144} y={340} w={20} h={13} t="RC" rot={-45} />
    <Net x={1128.500} y={427} w={20} h={13} t="RC" rot={-90} />
    <Net x={1128.500} y={524} w={20} h={13} t="RC" rot={-90} />
    <Net x={1160.500} y={576} w={21} h={13} t="RC" rot={45} />
    <Net x={1221.500} y={606.600} w={19} h={13} t="RC" />

    {parts.map(p => (
      <g key={p.name}>
        <rect x={p.x - 21.500} y="250.700" width="43" height="31" rx="8" fill={CU} />
        <rect x={p.x - 21.500} y="306" width="43" height="31" rx="8" fill={CU} />
        <rect x={p.x - 28} y="244.500" width="56" height="43.500" rx="14" stroke={CU} />
        <rect x={p.x - 28} y="300.500" width="56" height="43" rx="14" stroke={CU} />
        <path d={`M${p.t[0]} 287.500V302.500M${p.t[1]} 287.500V302.500`} stroke={SILK} strokeWidth="4" />
        <path d={`M${Math.round(p.x) - 6} 294.500h11M${Math.round(p.x) - .5} 289v11`} stroke={YARD} />
        <Label x={p.nx} y={225} w={p.nw} h={25.500} t={p.name} sw={2} s={0.86} />
        <Label x={p.vx} y={357.700} w={p.vw} h={18.500} t={p.val} sw={1.700} s={0.86} />
        <PadName x={p.x - .5} y={259.500} w={7} h={10.500} t={p.a} />
        <PadName x={p.x - .5} y={272} w={40} h={4.500} t="Net-(R1-Pad2)" />
        <PadName x={p.x - .5} y={314.500} w={7} h={10.500} t={p.b} />
        <PadName x={p.x - .5} y={330.500} w={p.netw} h={10.500} t={p.net} />
      </g>
    ))}

    <SquarePad x={494} y={499.500} r={20} hole={12} gap={26} />
    <RoundPad x={494} y={559.700} r={20} hole={12} gap={26} />
    <RoundPad x={733} y={260} r={20} hole={12} gap={26} />
    <RoundPad x={794} y={260} r={20} hole={12} gap={26} />
    <RoundPad x={1033} y={498.700} r={20} hole={12} gap={26} />
    <RoundPad x={1033} y={559.700} r={20} hole={12} gap={26} />
    <SquarePad x={1253} y={453} r={26} hole={15} gap={31.700} />
    <RoundPad x={1253} y={530} r={26} hole={15} gap={31.700} />
    <RoundPad x={1253} y={606.700} r={26} hole={15} gap={31.700} />

    <rect x="448" y="214" width="631" height="631" stroke={SILK} strokeWidth="4" strokeLinejoin="round" />
    <rect x="1213" y="492" width="80.300" height="155.300" stroke={SILK} strokeWidth="4" strokeLinejoin="round" />
    <path d="M1254 413H1213V453.500" stroke={SILK} strokeWidth="4" strokeLinecap="round" />
    <circle cx="430" cy="499" r="6" fill={SILK} />

    <PadName x={494} y={489.500} w={8} h={12.500} t="1" />
    <PadName x={494} y={504} w={37} h={4.500} t="Net-(R1-Pad2)" />
    <PadName x={494} y={550} w={9} h={12.500} t="6" />
    <PadName x={494} y={564.500} w={34} h={4.500} t="Net-(R1-Pad2)" />
    <PadName x={733} y={250.300} w={9} h={12.500} t="2" />
    <PadName x={794} y={250.300} w={9} h={12.500} t="3" />
    <PadName x={733} y={271} w={6} h={8} t="x" />
    <PadName x={794} y={271} w={6} h={8} t="x" />
    <PadName x={1033} y={489.500} w={10} h={12.500} t="4" />
    <PadName x={1033} y={510} w={14} h={9} t="RC" />
    <PadName x={1033} y={550} w={9} h={12.500} t="5" />
    <PadName x={1033} y={570} w={14} h={9} t="RC" />
    <PadName x={1253} y={440.500} w={11} h={17} t="1" />
    <PadName x={1253} y={467.500} w={42} h={13} t="3.3V" />
    <PadName x={1253} y={517} w={12} h={17} t="2" />
    <PadName x={1253} y={544.500} w={28} h={12.500} t="GND" />
    <PadName x={1253} y={594} w={12} h={17} t="3" />
    <PadName x={1253} y={621} w={19} h={12.500} t="RC" />

    <Label x={764.500} y={181} w={40} h={26} t="U4" sw={2} s={0.86} />
    <Label x={493.300} y={458} w={14} h={18.500} t="1" sw={1.800} />
    <Label x={1251.700} y={676.700} w={54} h={25} t="J17" sw={1.200} mono />
    {tags.map(g => <rect key={g.id} x={g.x} y={g.y} width={g.w} height={g.h} fill={SILK} mask={`url(#tag-${g.id})`} />)}

    <rect x="471" y="865" width="570" height="61" fill={SILK} />
    <Label x={543.500} y={895.500} w={120} h={28} t="Carbon" sw={2.600} s={0.84} c="#001023" />
    <Label x={698.500} y={895.500} w={157} h={28} t="Monoxide" sw={2.600} s={0.84} c="#001023" />
    <Label x={832.500} y={895.500} w={73} h={28} t="(CO)" sw={2.600} s={0.84} c="#001023" />
    <Label x={947} y={895.500} w={116} h={28} t="Sensor" sw={2.600} s={0.84} c="#001023" />

    <path d="M690 456.500H770M729.500 416V496" stroke="#9c9c9c" />
    <path d="M758 529.500h11M763.500 524v11" stroke={YARD} />
  </svg>
);

/* ---------- data ---------- */
const layers: [string, string, boolean][] = [
  ['F.Cu', '#c83434', true], ['B.Cu', '#4d7fc4', true], ['F.Adhesive', '#840084', false], ['B.Adhesive', '#000084', false],
  ['F.Paste', '#b4a09a', false], ['B.Paste', '#00c2c2', false], ['F.Silkscreen', '#f2eda1', true], ['B.Silkscreen', '#e8b2a7', false],
  ['F.Mask', '#d864ff', false], ['B.Mask', '#02ffee', false], ['User.Drawings', '#c2c2c2', false], ['User.Comments', '#5994dc', false],
  ['User.Eco1', '#b4dbd2', false], ['User.Eco2', '#d8c852', false], ['Edge.Cuts', '#d0d2cd', true], ['Margin', '#ff26e2', false],
  ['F.Courtyard', '#ff26e2', true], ['B.Courtyard', '#26e9ff', true], ['F.Fab', '#afafaf', false],
];
const filters: [string, boolean][] = [
  ['All items', true], ['Locked items', false], ['Footprints', true], ['Text', true], ['Tracks', true], ['Vias', true],
  ['Pads', true], ['Graphics', true], ['Zones', true], ['Rule Areas', true], ['Dimensions', true], ['Other items', true],
];
const menus: [string, number][] = [['File', 41], ['Edit', 44.5], ['View', 49.5], ['Place', 53], ['Route', 57], ['Inspect', 65], ['Tools', 53], ['Preferences', 94.500], ['Help', 50]];
const info: [string, string, number][] = [['Pads', '15', 69], ['Vias', '0', 65], ['Track Segments', '25', 142], ['Nets', '6', 68], ['Unrouted', '0', 100]];

export default function App() {
  return (
    <Screen>
      <Global />
      <TitleBar>
        <Svg s={20}><Traces /></Svg>
        <TitleText>CO Sesnor Breakout — PCB Editor</TitleText>
        <WindowButtons>
          <svg viewBox="0 0 58 29" fill="none" stroke="#8a8a8a"><path d="M23 13.500h12" /></svg>
          <svg viewBox="0 0 58 29" fill="none" stroke="#8a8a8a"><rect x="22.500" y="10.500" width="9" height="9" rx="1.500" /><path d="M25 8.500h7a2 2 0 0 1 2 2v7" /></svg>
          <svg viewBox="0 0 58 29" fill="none" stroke="#8a8a8a"><path d="M23 8.500l11.500 11.500M34.500 8.500L23 20" /></svg>
        </WindowButtons>
      </TitleBar>
      <MenuBar>{menus.map(([m, w]) => <MenuItem key={m} $w={w}>{m}</MenuItem>)}</MenuBar>
      <TopBar>
        <Tools list="save | setup | page print plot | undo redo | find | refresh zin zout zfit zobj zsel | ccw cw flipv fliph group ungroup lock unlock | fpedit fplib | update drc |" />
        <VSep $m="0 0 0 1.500px" style={{ visibility: 'hidden' }} />
        <Combo $w={156} $h={31} $dark>
          <Swatch $c={SILK} $line /><Fill>F.Silkscreen</Fill><Chevron />
        </Combo>
        <Tools list="pair | sch | term | curve tag fb" />
      </TopBar>
      <OptionsBar>
        <OptionsInner>
          <Combo $w={220} $ls={-0.26}>Track: 0.750 mm (0.02953 in)<Chevron /></Combo>
          <VSep $m="0 0 0 2px" style={{ visibility: 'hidden' }} />
          <ToolButton $v $on>
            <Svg><path d="M1.500 2v16c0 2.500 2 4 4.500 4h12c2.500 0 4.500-1.500 4.500-4V2" stroke={G} strokeWidth="2" /><path d="M7 8.500h10M7 13h10" stroke={G} strokeWidth="1.500" /><circle cx="12" cy="21.500" r="3" fill={B} /></Svg>
          </ToolButton>
          <VSep $m="0 6px 0 5.500px" />
          <Combo $w={185.500} $ls={-0.1}>Via: use netclass sizes<Chevron /></Combo>
          <VSep $m="0 6px 0 5.500px" />
          <Combo $w={245} $ls={-0.06}>Grid: 0.0100 mm (0.0004 in)<Chevron /></Combo>
          <VSep $m="0 6px 0 5px" />
          <Combo $w={119} $ls={-0.1}>Zoom 8.00<Chevron /></Combo>
        </OptionsInner>
      </OptionsBar>

      <Work>
        <SideTools $w={42}>
          <Tools vertical on={['grid', 'mm', 'rats', 'zout2', 'layers']} list="grid polar in mil mm cursor | angle | rats ratsc | hlnet dim | zfill zout2 | fpo via trk | layers tools" />
        </SideTools>
        <Board><BoardView /></Board>
        <SideTools $w={42}>
          <Tools vertical on={['arrow']} more={['route', 'tune', 'meas', 'origin']} list="arrow netx | fp route tune vput zput hatch | line arc rect circ poly img text tbox meas del | origin ruler" />
        </SideTools>
        <Gutter />
        <Side>
          <PanelHead>Appearance</PanelHead>
          <Tabs>
            <Tab $on $w={62}>Layers</Tab>
            <Tab $w={61}>Objects</Tab>
            <Tab $w={9} style={{ color: '#b8660a' }}>N</Tab>
            <Arrow><svg width="5" height="8"><path d="M5 0v8L0 4z" /></svg></Arrow>
            <Arrow><svg width="5" height="8"><path d="M0 0v8l5-4z" /></svg></Arrow>
          </Tabs>
          <LayerFrame>
            <ListBox>
              <Layers>
                {layers.map(([name, color, shown]) => (
                  <LayerRow key={name} $on={name === 'F.Silkscreen'}>
                    {name === 'F.Silkscreen' && <Pointer />}
                    <Swatch $c={color} /><Eye on={shown} />{name}
                  </LayerRow>
                ))}
              </Layers>
              <Thumb />
            </ListBox>
            <Display>
              <Line $h={19} $c="#6d6d6d"><svg width="16" height="6"><path d="M4 0h9L8.500 5z" fill="#555" /></svg>Layer Display Options</Line>
              <Line $h={30}>Inactive layers:</Line>
              <RadioLine $h={18}><Radio $on />Normal<Radio $ml={13} />Dim<Radio $ml={13} />High-contrast</RadioLine>
              <Line $h={37}><Box />Flip board view</Line>
            </Display>
          </LayerFrame>
          <Presets>
            <PresetLabel>Presets (Ctrl+Tab):</PresetLabel>
            <Combo $w={166} $ls={0.500}>---<Chevron /></Combo>
            <PresetLabel $mt={4}>Viewports (Shift+Tab):</PresetLabel>
            <Combo $w={166} $ls={0.500}>---<Chevron /></Combo>
          </Presets>
          <Strip />
          <PanelHead>Selection Filter</PanelHead>
          <Filter>
            {filters.map(([name, on]) => <Check key={name}><Box $on={on}>{on && <Tick />}</Box>{name}</Check>)}
          </Filter>
        </Side>
      </Work>

      <Messages>{info.map(([k, v, w]) => <Message key={k} $w={w}>{k}<br />{v}</Message>)}</Messages>
      <Status>
        <Field $w={585} $ls={0.085}>File 'D:\Circuit2PCB\mpmurphy Esp32C3 PCB\CO Sensor PCB\KiCAD Source Files\CO S...</Field>
        <Field $w={97}>Z 8.46</Field>
        <Field $w={203}>X 211.8800  Y 110.3600</Field>
        <Field $w={321}>dx 211.8800  dy 110.3600  dist 238.8984</Field>
        <Field $w={234}>grid X 0.0100  Y 0.0100</Field>
        <Field $w={77}>mm</Field>
        <Field $w={215} $ls={0.200}>Select item(s)</Field>
        <Field $w={188} />
      </Status>

      <TaskBar>
        <Weather>
          <svg width="32" height="32" viewBox="0 0 32 32">
            <defs><linearGradient id="sun" x2=".8" y2="1"><stop stopColor="#f7b526" /><stop offset="1" stopColor="#ee6a12" /></linearGradient><linearGradient id="cloud" y2="1" x2="0"><stop stopColor="#cfe0fb" /><stop offset="1" stopColor="#7fa6e6" /></linearGradient></defs>
            <circle cx="15" cy="13" r="12" fill="url(#sun)" />
            <path d="M10 30a5.500 5.500 0 0 1 .5-11 7 7 0 0 1 13 1.500A5 5 0 0 1 25 30z" fill="url(#cloud)" />
          </svg>
          <div>27°C<small>Partly cloudy</small></div>
        </Weather>
        <Task style={{ margin: 0 }}>
          <svg width="29" height="30"><defs><linearGradient id="win" x2="1" y2="1"><stop stopColor="#4ccbfb" /><stop offset="1" stopColor="#0067d2" /></linearGradient></defs><path d="M0 1.500A1.500 1.500 0 0 1 1.500 0H14v14.500H0zM15 0h12.500A1.500 1.500 0 0 1 29 1.500v13H15zM0 15.500h14V30H1.500A1.500 1.500 0 0 1 0 28.500zM15 15.500h14v13a1.500 1.500 0 0 1-1.500 1.500H15z" fill="url(#win)" /></svg>
        </Task>
        <Search>
          <svg width="20" height="20" fill="none" stroke="#222" strokeWidth="2"><circle cx="9" cy="8" r="6.500" /><path d="M13.500 13L18.500 18.500" /></svg>
          <Fill>Search</Fill>
          <svg width="62" height="34" viewBox="0 0 62 34" fill="none">
            <ellipse cx="31" cy="29" rx="29" ry="4.500" fill="#e8bd8c" />
            <path d="M6 15l12-5 11 1 2 14-12 6-9-2z" fill="#fff" stroke="#4c9a63" strokeWidth="1.500" /><path d="M18 11l2 17M10 17l6-2M11 21l6-2M21 15l6-1" stroke="#9aa" />
            <path d="M24 22L31 7" stroke="#f08a24" strokeWidth="4" /><path d="M30 9l2-5" stroke="#e2445c" strokeWidth="4" />
            <rect x="38" y="5" width="18" height="25" rx="8" fill="#1b7fe6" /><path d="M44 5c0-5 6-5 6 0" stroke="#1457b0" strokeWidth="2" /><rect x="41" y="17" width="12" height="11" rx="2" fill="#4aa6ff" /><path d="M41 12h12" stroke="#0a4fa6" />
            <path d="M3 1l1.500 3.500L8 6 4.500 7.500 3 11 1.500 7.500-1 6l2.500-1.500z" fill="#d870e8" /><circle cx="57" cy="7" r="2" fill="#f7a522" /><circle cx="34" cy="17" r="1.800" fill="#58c9e8" />
          </svg>
        </Search>
        <Task><svg width="30" height="30"><path d="M1 8h22v20H1z" fill="#2b2b2b" /><path d="M8 1h21v20H8z" fill="#e9e9ec" opacity=".88" /></svg></Task>
        <Task><svg width="30" height="30"><defs><linearGradient id="chat" x2="1" y2="1"><stop stopColor="#9a76d0" /><stop offset="1" stopColor="#3d45c4" /></linearGradient></defs><path d="M15 1a14 14 0 1 1-6 26.500L1.500 29 2 21A14 14 0 0 1 15 1z" fill="url(#chat)" /><path d="M7 10h10v11H7zM18 13.500l5-3v10l-5-3z" fill="#fff" /></svg></Task>
        <Task><svg width="26" height="28" fill="none"><rect width="26" height="28" rx="6" fill="#1d3444" /><path d="M21 8a10 10 0 1 0 0 12" stroke="#d7ecf0" strokeWidth="2" /><path d="M18 10a6.500 6.500 0 1 0 0 8" stroke="#45d5c0" strokeWidth="1.500" /><path d="M8 10.500h9v7H8zM18 13l4-2.500v7L18 15z" fill="#35dbb6" /></svg></Task>
        <Task $run><svg width="30" height="30"><path d="M0 3a2 2 0 0 1 2-2h8l3 3H0z" fill="#d99a10" /><path d="M0 5h28a2 2 0 0 1 2 2v21H0z" fill="#ffd04a" /><path d="M0 14h30v14H0z" fill="#fbc02f" /><path d="M5 29v-5a3 3 0 0 1 3-3h14a3 3 0 0 1 3 3v5z" fill="#1273c9" /><path d="M9 25h12v1.500H9z" fill="#0a4a8c" /></svg></Task>
        <Task $run><svg width="30" height="30" viewBox="-15 -15 30 30"><path d="M0 0L-12.100-7A14 14 0 0 1 12.100-7z" fill="#ea4335" /><path d="M0 0L12.100-7A14 14 0 0 1 0 14z" fill="#fbbc05" /><path d="M0 0L0 14A14 14 0 0 1-12.100-7z" fill="#34a853" /><path d="M0-7H12.100A14 14 0 0 0-12.100-7L-6 3z" fill="#ea4335" /><circle r="7" fill="#fff" /><circle r="5.500" fill="#4285f4" /></svg></Task>
        <Task $run><svg width="30" height="30" viewBox="0 0 24 24"><circle cx="12" cy="12" r="9" fill="#7d858e" /><circle cx="12" cy="12" r="10" fill="none" stroke="#7d858e" strokeWidth="3" strokeDasharray="5 2.854" /><circle cx="12" cy="12" r="4.800" fill="#0b63b3" stroke="#dfe7f0" strokeWidth="1.200" /></svg></Task>
        <Task $run><svg width="29" height="30"><defs><linearGradient id="ki" y2="1" x2="0"><stop stopColor="#1c49c0" /><stop offset="1" stopColor="#302ab8" /></linearGradient></defs><rect width="29" height="30" rx="4" fill="url(#ki)" /><text x="3.500" y="23" fontSize="21" fontWeight="700" fill="#fff" textLength="20">Ki</text><circle cx="21.500" cy="7.500" r="2.600" fill="#f26a1b" /></svg></Task>
        <Task $on><svg width="30" height="30" fill="none"><path d="M3 3h13v13H3z" fill="#dde1e6" stroke="#d8431a" strokeWidth="3" strokeDasharray="3 1.200" /><path d="M7 7h12v9l-4 3H7z" fill="#d3d7dc" /><path d="M17 14v8M16 16l7-1" stroke="#8a9099" strokeWidth="2.500" /><circle cx="25" cy="15" r="2.800" stroke="#1e9be8" strokeWidth="2" /><circle cx="16" cy="26" r="2.800" stroke="#1e9be8" strokeWidth="2" /></svg></Task>
        <Tray>
          <svg width="15" height="9" fill="none"><path d="M1 8l6-6.500L13 8" stroke="#1a1a1a" strokeWidth="1.700" /></svg>
          <svg width="21" height="16" fill="none" stroke="#1a1a1a" strokeWidth="1.300" style={{ margin: '0 15px 0 22px' }}><rect x="1" y="1.500" width="19" height="13" rx="2" /><path d="M4 5.500h13M4 8.500h13" strokeDasharray="1.800 1.400" strokeWidth="1.700" /><path d="M6 11.500h9" /></svg>
          <Stack $w={44}>ENG<br />INTL</Stack>
          <svg width="21" height="17" fill="none" stroke="#1a1a1a" strokeWidth="1.500" style={{ margin: '0 8px 0 15px' }}><path d="M1 6.500C6.500 0 14.500 0 20 6.500M4 9.500c4-4.500 9-4.500 13 0M7 12.500c2-2.500 5-2.500 7 0" /><circle cx="10.500" cy="14.500" r="1.500" fill="#1a1a1a" stroke="none" /></svg>
          <svg width="20" height="16" fill="none" stroke="#1a1a1a" strokeWidth="1.200"><path d="M1 5.500h3l5-4v13l-5-4H1zM12.500 5.500l6 6M18.500 5.500l-6 6" /></svg>
          <svg width="21" height="18" fill="none" style={{ margin: '0 0 0 10px' }}><rect x="5" y="5" width="13" height="10" rx="2" stroke="#1a1a1a" strokeWidth="1.500" /><path d="M8 7.500h8v5.500H8zM19 8h2v4h-2zM5 0L0 9h4l-1 6 5-8H5z" fill="#1a1a1a" /></svg>
          <Stack $right $w={99}>4:55 am<br />11/08/2023</Stack>
        </Tray>
      </TaskBar>
    </Screen>
  );
}
